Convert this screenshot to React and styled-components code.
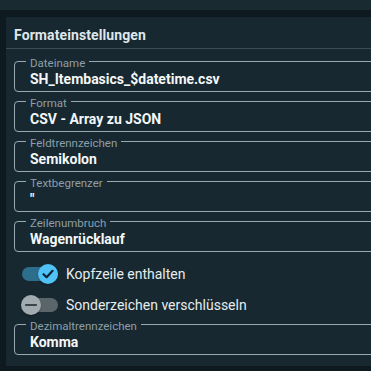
import React from "react";
import styled, { createGlobalStyle } from "styled-components";

const GlobalStyle = createGlobalStyle`
  html, body { margin: 0; padding: 0; }
  body {
    background: #0e1a1f;
    overflow: hidden;
    font-family: Roboto, "Noto Sans", "Liberation Sans", sans-serif;
    -webkit-font-smoothing: antialiased;
  }
`;

const Page = styled.div`
  width: 371px;
  height: 371px;
  overflow: hidden;
  background: #0e1a1f;
`;

const TopBar = styled.div`
  height: 10px;
  background: #1a2a31;
`;

const Main = styled.div`
  padding: 7px 0 0 6px;
`;

const Panel = styled.section`
  width: 400px;
  height: 349px;
  background: #172830;
  display: flex;
  flex-direction: column;
`;

const PanelHeader = styled.h2`
  margin: 0;
  height: 32px;
  box-sizing: border-box;
  padding: 4px 8px 0;
  display: flex;
  align-items: center;
  font-size: 14px;
  font-weight: 700;
  color: #dfe7eb;
  border-bottom: 1px solid #3a4b52;
  letter-spacing: 0.1px;
`;

const Body = styled.div`
  padding: 6px 0 0 8px;
  display: flex;
  flex-direction: column;
  gap: 3px;
`;

const Field = styled.fieldset`
  margin: 0;
  width: 100%;
  height: 37px;
  box-sizing: border-box;
  padding: 0 14px 0 15px;
  border: 1px solid #98a9b1;
  border-radius: 4px;
  min-width: 0;
`;

const Legend = styled.legend`
  margin-left: -4px;
  padding: 0 4px;
  height: 12px;
  font-size: 11.5px;
  line-height: 16px;
  color: #8d9fa8;
`;

const Value = styled.div`
  padding-top: 3px;
  font-size: 14px;
  line-height: 18px;
  font-weight: 700;
  color: #f4f7f8;
  white-space: nowrap;
`;

const ToggleList = styled.div`
  padding: 9px 0 0 8px;
  display: flex;
  flex-direction: column;
  gap: 11px;
`;

const ToggleRow = styled.label`
  display: flex;
  align-items: center;
  gap: 8px;
  height: 20px;
  font-size: 14px;
  color: #e6ecef;
`;

const Switch = styled.span`
  position: relative;
  width: 36px;
  height: 20px;
  flex: none;
`;

const Track = styled.span`
  position: absolute;
  left: 0;
  right: 0;
  top: 3px;
  height: 14px;
  border-radius: 7px;
  background: ${(p) => (p.$on ? "#2d6e8d" : "#5b666b")};
`;

const Knob = styled.span`
  position: absolute;
  top: 0;
  left: ${(p) => (p.$on ? "16px" : "-1px")};
  width: 20px;
  height: 20px;
  border-radius: 50%;
  background: ${(p) => (p.$on ? "#4fc3f7" : "#a2abb0")};
  display: flex;
  align-items: center;
  justify-content: center;
  box-shadow: 0 1px 2px rgba(0, 0, 0, 0.3);
`;

function Toggle({ on, label }) {
  return (
    <ToggleRow>
      <Switch>
        <Track $on={on} />
        <Knob $on={on}>
          {on ? (
            <svg width="14" height="14" viewBox="0 0 14 14">
              <path d="M2.5 7.2 L5.6 10.2 L11.6 3.8" fill="none" stroke="#0f2430" strokeWidth="2.2" strokeLinecap="round" strokeLinejoin="round" />
            </svg>
          ) : (
            <svg width="14" height="14" viewBox="0 0 14 14">
              <path d="M2 7 H12" stroke="#3a4449" strokeWidth="2.2" strokeLinecap="round" />
            </svg>
          )}
        </Knob>
      </Switch>
      {label}
    </ToggleRow>
  );
}

function OutlinedField({ label, value }) {
  return (
    <Field>
      <Legend>{label}</Legend>
      <Value>{value}</Value>
    </Field>
  );
}

export default function App() {
  return (
    <>
      <GlobalStyle />
      <Page>
        <TopBar />
        <Main>
          <Panel>
            <PanelHeader>Formateinstellungen</PanelHeader>
            <Body>
              <OutlinedField label="Dateiname" value="SH_Itembasics_$datetime.csv" />
              <OutlinedField label="Format" value="CSV - Array zu JSON" />
              <OutlinedField label="Feldtrennzeichen" value="Semikolon" />
              <OutlinedField label="Textbegrenzer" value={'"'} />
              <OutlinedField label="Zeilenumbruch" value="Wagenrücklauf" />
              <ToggleList>
                <Toggle on label="Kopfzeile enthalten" />
                <Toggle label="Sonderzeichen verschlüsseln" />
              </ToggleList>
              <OutlinedField label="Dezimaltrennzeichen" value="Komma" />
            </Body>
          </Panel>
        </Main>
      </Page>
    </>
  );
}
